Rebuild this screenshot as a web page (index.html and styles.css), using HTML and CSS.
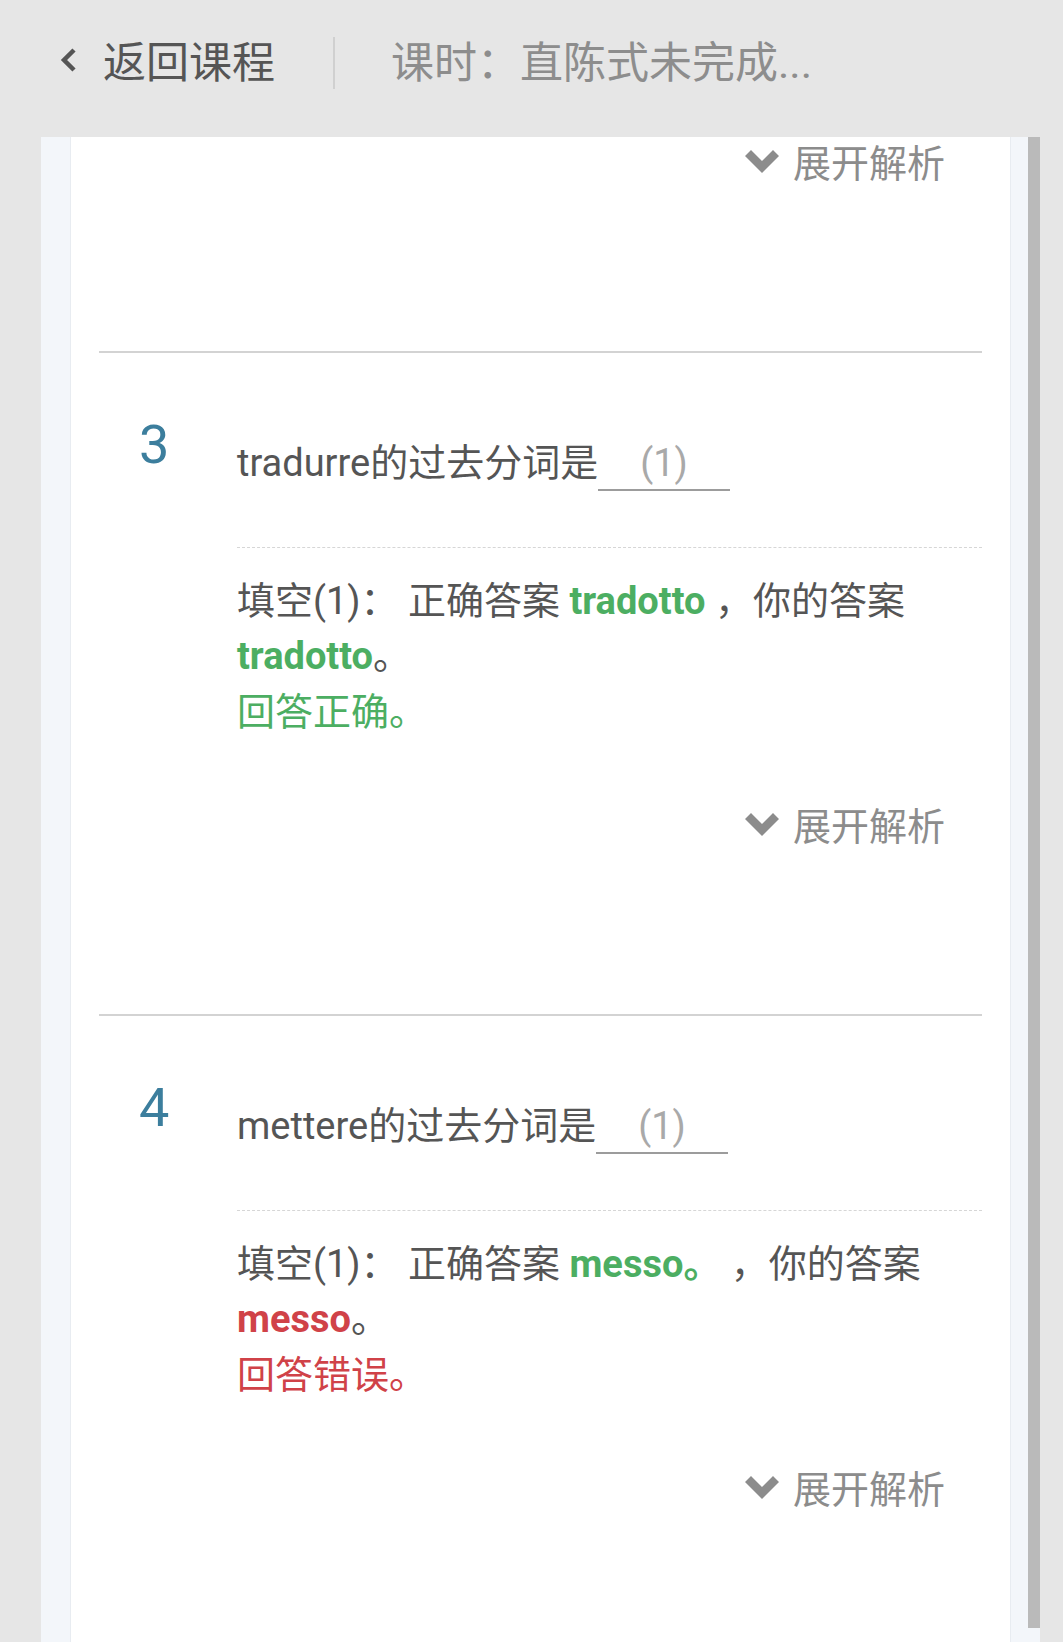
FILE: index.html
```html
<!DOCTYPE html>
<html lang="zh-CN">
<head>
<meta charset="utf-8">
<title>课时</title>
<link rel="stylesheet" href="styles.css">
</head>
<body>
<header class="header">
  <svg class="back-icon" viewBox="0 0 20 26" aria-hidden="true"><polyline points="16,3 6,13 16,23" fill="none" stroke="#555" stroke-width="4.5"/></svg>
  <span class="back-text">返回课程</span>
  <span class="divider"></span>
  <span class="title">课时：直陈式未完成...</span>
</header>
<div class="main">
  <div class="card">
    <div class="sheet">
      <div class="expand expand-first">
        <svg class="chev" viewBox="0 0 34 23" aria-hidden="true"><polygon points="0,6 6,0 17,11 28,0 34,6 17,23" fill="#8c8c8c"/></svg>
        <span>展开解析</span>
      </div>

      <div class="item">
        <div class="q-row">
          <div class="num">3</div>
          <div class="q-body">
            <div class="q-text">tradurre的过去分词是<span class="blank">(1)</span></div>
            <div class="answer">
              <div>填空(1)： 正确答案 <span class="ok">tradotto</span> ，你的答案 <span class="ok">tradotto</span>。</div>
              <div class="result-ok">回答正确。</div>
            </div>
          </div>
        </div>
        <div class="expand">
          <svg class="chev" viewBox="0 0 34 23" aria-hidden="true"><polygon points="0,6 6,0 17,11 28,0 34,6 17,23" fill="#8c8c8c"/></svg>
          <span>展开解析</span>
        </div>
      </div>

      <div class="item">
        <div class="q-row">
          <div class="num">4</div>
          <div class="q-body">
            <div class="q-text">mettere的过去分词是<span class="blank">(1)</span></div>
            <div class="answer">
              <div>填空(1)： 正确答案 <span class="ok">messo。</span> ，你的答案 <span class="bad">messo</span>。</div>
              <div class="result-bad">回答错误。</div>
            </div>
          </div>
        </div>
        <div class="expand">
          <svg class="chev" viewBox="0 0 34 23" aria-hidden="true"><polygon points="0,6 6,0 17,11 28,0 34,6 17,23" fill="#8c8c8c"/></svg>
          <span>展开解析</span>
        </div>
      </div>
    </div>
  </div>
  <div class="scrollbar"></div>
</div>
</body>
</html>
```
FILE: styles.css
```css
* {
  box-sizing: border-box;
  margin: 0;
  padding: 0;
}

html, body {
  height: 100%;
  overflow: hidden;
}

body {
  background: #e6e6e6;
  font-family: Roboto, "Noto Sans CJK SC", sans-serif;
  color: #555;
}

.header {
  height: 137px;
  padding: 0 0 12px 58px;
  display: flex;
  align-items: center;
}

.back-icon {
  flex: none;
  width: 20px;
  height: 26px;
  margin-bottom: 6px;
}

.back-text {
  margin-left: 25px;
  font-size: 43px;
  line-height: 50px;
  color: #555;
}

.divider {
  flex: none;
  width: 2px;
  height: 52px;
  background: #d0d0d0;
  margin-left: 58px;
}

.title {
  margin-left: 56px;
  font-size: 43px;
  line-height: 50px;
  color: #8d8d8d;
  white-space: nowrap;
}

.main {
  position: relative;
  margin-left: 41px;
  width: 999px;
  height: calc(100% - 137px);
}

.card {
  height: 100%;
  background: #f3f6fa;
  padding: 0 29px;
  display: flex;
}

.sheet {
  flex: 1;
  background: #fff;
  border-left: 1px solid #e8ecf1;
  border-right: 1px solid #e8ecf1;
  padding: 0 28px;
  overflow: hidden;
}

.scrollbar {
  position: absolute;
  top: 0;
  right: 0;
  width: 12px;
  height: 1491px;
  background: #bababa;
}

.item {
  border-top: 2px solid #d3d3d3;
}

.q-row {
  display: flex;
  padding-top: 65px;
  padding-left: 40px;
}

.num {
  flex: none;
  width: 98px;
  font-size: 54px;
  line-height: 54px;
  color: #3c7e9d;
}

.q-body {
  flex: 1;
  margin-top: 17px;
}

.q-text {
  font-size: 38px;
  line-height: 56px;
  color: #555;
}

.blank {
  display: inline-block;
  padding: 0 42px;
  line-height: 52px;
  border-bottom: 2px solid #9c9c9c;
  color: #a9a9a9;
}

.answer {
  margin-top: 56px;
  border-top: 1px dashed #d6d6d6;
  padding-top: 26px;
  font-size: 38px;
  line-height: 55.5px;
  color: #555;
}

.ok {
  color: #4cae62;
  font-weight: 700;
}

.bad {
  color: #d04248;
  font-weight: 700;
}

.result-ok {
  color: #4cae62;
}

.result-bad {
  color: #d04248;
}

.expand {
  display: flex;
  justify-content: flex-end;
  align-items: center;
  gap: 14px;
  padding-right: 37px;
  margin-top: 60px;
  padding-bottom: 158.5px;
  font-size: 38px;
  line-height: 55px;
  color: #8c8c8c;
}

.expand-first {
  margin-top: 0;
}

.chev {
  flex: none;
  width: 34px;
  height: 23px;
  margin-bottom: 6px;
}
```
